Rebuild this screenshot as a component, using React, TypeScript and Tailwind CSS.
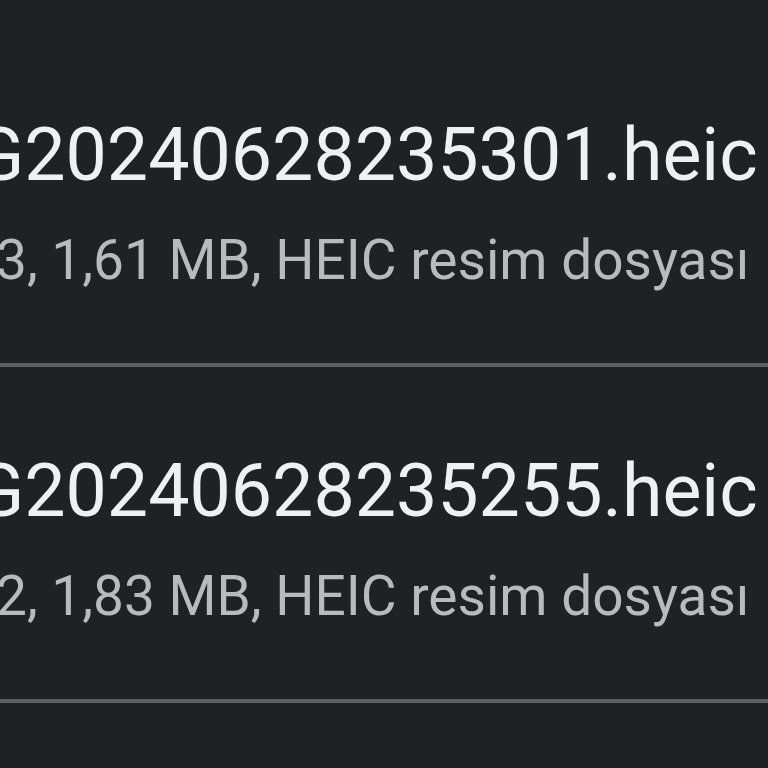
import React from 'react';

interface FileItem {
  name: string;
  meta: string;
}

const files: FileItem[] = [
  { name: 'IMG20240628235301.heic', meta: '28.06.2024 23:53, 1,61 MB, HEIC resim dosyası' },
  { name: 'IMG20240628235255.heic', meta: '28.06.2024 23:52, 1,83 MB, HEIC resim dosyası' },
];

export default function App() {
  return (
    <main
      className="w-[768px] h-[768px] overflow-hidden bg-[#202124] pt-[31px]"
      style={{ fontFamily: 'Roboto, "Noto Sans", sans-serif' }}
    >
      {files.map((file) => (
        <div key={file.name} className="border-b-4 border-[#5f6064]">
          <div className="h-[332px] pt-[80px] whitespace-nowrap">
            <p className="ml-[-110px] text-[73.5px] leading-[88px] text-[#eef0f2]">{file.name}</p>
            <p className="ml-[-400px] mt-[29px] text-[55px] leading-[64px] text-[#b9babd]">{file.meta}</p>
          </div>
        </div>
      ))}
    </main>
  );
}
